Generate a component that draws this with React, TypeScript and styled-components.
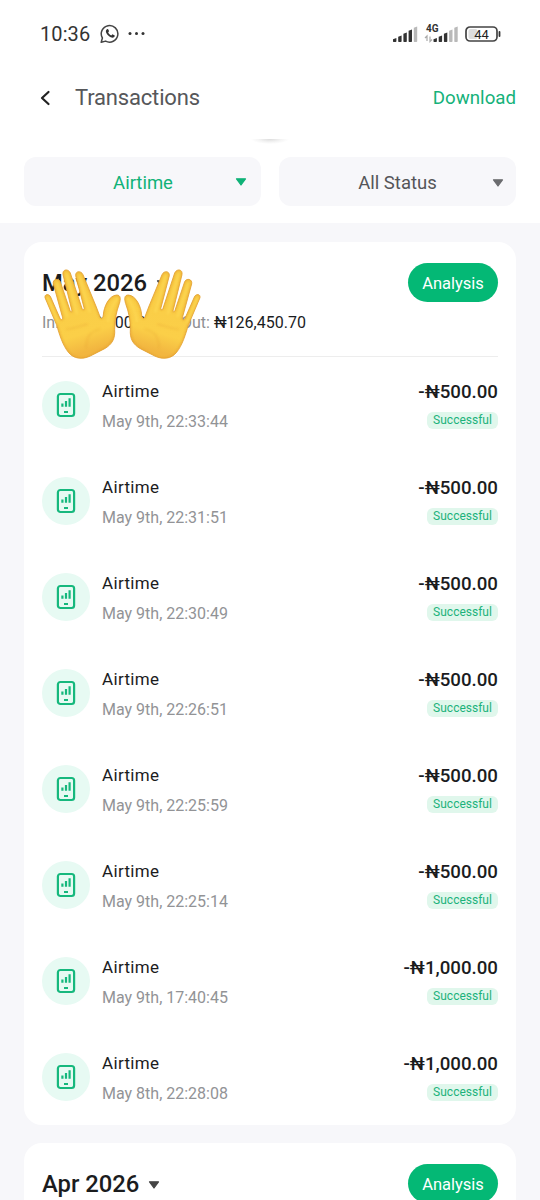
import React from "react";
import styled, { createGlobalStyle } from "styled-components";

const GlobalStyle = createGlobalStyle`
  * { box-sizing: border-box; }
  html, body { margin: 0; background: #f7f7fa; }
  body { font-family: Roboto, "Liberation Sans", sans-serif; color: #1b1c1e; }
`;

const Screen = styled.div`
  width: 540px;
  height: 1200px;
  overflow: hidden;
  background: #f7f7fa;
`;

const Top = styled.header`
  height: 223px;
  background: #fff;
`;

const StatusBar = styled.div`
  display: flex;
  align-items: center;
  height: 68px;
  padding: 0 39px 0 40px;
  color: #333;
`;

const Clock = styled.span`
  width: 50px;
  font-size: 20px;
  line-height: 24px;
  letter-spacing: 0.1px;
  white-space: nowrap;
`;

const StatusIcons = styled.div`
  display: flex;
  align-items: center;
  margin-left: auto;
`;

const CallIcon = styled.svg`
  display: block;
  margin-left: 10px;
`;

const NavBar = styled.nav`
  display: flex;
  align-items: center;
  height: 59px;
  padding: 0 24px 0 39px;
`;

const Title = styled.h1`
  margin: 0 0 0 24px;
  font-size: 22px;
  font-weight: 400;
  line-height: 28px;
  letter-spacing: -0.17px;
  color: #56575a;
`;

const Download = styled.span`
  margin-left: auto;
  font-size: 18.7px;
  line-height: 24px;
  color: #15b27a;
`;

const PullShadow = styled.div`
  width: 38px;
  height: 5px;
  margin: 12px auto 0;
  background: radial-gradient(ellipse 50% 100% at 50% 0, #dcdcdc, #f4f4f4 60%, #fff 100%);
`;

const Filters = styled.div`
  display: grid;
  grid-template-columns: 1fr 1fr;
  gap: 18px;
  padding: 13px 24px 0;
`;

const Filter = styled.div<{ $active?: boolean }>`
  display: flex;
  align-items: center;
  height: 49px;
  padding: 0 ${(p) => (p.$active ? 14 : 12)}px 0 ${(p) => (p.$active ? 27 : 24)}px;
  border-radius: 12px;
  background: #f7f7fa;
  color: ${(p) => (p.$active ? "#0fb277" : "#545558")};
  font-size: 18.5px;
  line-height: 24px;
`;

const FilterLabel = styled.span`
  flex: 1;
  padding-top: 2px;
  text-align: center;
`;

const Caret = styled.svg<{ $gap?: number; $drop?: number }>`
  display: block;
  flex: none;
  margin-left: ${(p) => p.$gap ?? 0}px;
  margin-top: ${(p) => p.$drop ?? 0}px;
`;

const List = styled.main`
  display: flex;
  flex-direction: column;
  gap: 18px;
  padding: 19px 24px 0;
`;

const Card = styled.section`
  padding: 21px 18px 0;
  border-radius: 18px;
  background: #fff;
`;

const MonthHead = styled.div`
  position: relative;
  height: 94px;
  border-bottom: 1px solid #ededed;
`;

const MonthRow = styled.div`
  display: flex;
  align-items: center;
  justify-content: space-between;
  height: 39px;
`;

const Month = styled.h2`
  display: flex;
  align-items: center;
  margin: 1px 0 0;
  font-size: 23.8px;
  font-weight: 500;
  line-height: 28px;
`;

const Analysis = styled.button`
  width: 90px;
  height: 39px;
  padding: 2px 0 0;
  border: 0;
  border-radius: 20px;
  background: #04b875;
  color: #fff;
  font-family: inherit;
  font-size: 16.5px;
`;

const Totals = styled.div`
  display: flex;
  margin-top: 10px;
  font-size: 16px;
  line-height: 22px;
  color: #8e8f92;
  white-space: pre;
`;

const TotalPart = styled.span<{ $width?: number }>`
  width: ${(p) => (p.$width ? `${p.$width}px` : "auto")};
`;

const Value = styled.b`
  font-weight: 400;
  color: #1b1c1e;
`;

const HandsArt = styled.svg`
  position: absolute;
  left: 0;
  top: 5px;
`;

const Rows = styled.ul`
  margin: 0;
  padding: 0;
  list-style: none;
`;

const Row = styled.li`
  display: flex;
  align-items: flex-start;
  height: 96px;
  padding-top: 24px;
`;

const Badge = styled.div`
  display: grid;
  place-items: center;
  width: 48px;
  height: 48px;
  margin-right: 12px;
  border-radius: 50%;
  background: #e7faf3;
`;

const Details = styled.div`
  flex: 1;
`;

const Name = styled.div`
  font-size: 17px;
  line-height: 21px;
  letter-spacing: 0.35px;
`;

const When = styled.div`
  margin-top: 9px;
  font-size: 16px;
  line-height: 22px;
  color: #929396;
`;

const Result = styled.div`
  display: flex;
  flex-direction: column;
  align-items: flex-end;
`;

const Amount = styled.div`
  font-size: 18.7px;
  font-weight: 500;
  line-height: 22px;
`;

const Status = styled.div`
  width: 71px;
  height: 17px;
  margin-top: 9px;
  border-radius: 6px;
  background: #e0f7ec;
  color: #1cb27b;
  font-size: 12px;
  line-height: 17px;
  text-align: center;
`;

function CaretDown({ color, gap, drop }: { color: string; gap?: number; drop?: number }) {
  return (
    <Caret $gap={gap} $drop={drop} width="12" height="8" viewBox="0 0 12 8">
      <path d="M1.5 .8h9L6 7Z" fill={color} stroke={color} strokeWidth="1.2" strokeLinejoin="round" />
    </Caret>
  );
}

function WhatsApp() {
  return (
    <CallIcon width="48" height="20" viewBox="0 0 48 20" fill="none">
      <path d="M1.2 18.3 2.4 14a8.3 8.3 0 1 1 3.2 3.1Z" stroke="#444" strokeWidth="1.5" strokeLinejoin="round" />
      <path d="M6.9 5.3c.5-.5 1.1-.4 1.4.2l.7 1.6c.1.4-.6 1-.8 1.4.7 1.4 1.7 2.3 3.2 2.9.5-.3.9-1.2 1.4-1l1.6.8c.6.3.3 1.4-.3 1.9-1.2 1.1-3.3.5-5.3-1.1-2-1.7-3.2-3.7-2.9-5.2.1-.6.5-1.1 1-1.5Z" fill="#333" />
      <circle cx="30" cy="9.5" r="1.5" fill="#333" />
      <circle cx="36.5" cy="9.5" r="1.5" fill="#333" />
      <circle cx="43" cy="9.5" r="1.5" fill="#333" />
    </CallIcon>
  );
}

const BARS = [
  [0, 4],
  [5.2, 6.5],
  [10.4, 9.5],
  [15.6, 12.5],
  [20.8, 15.5],
];

function Bars({ x, y, active }: { x: number; y: number; active: number }) {
  return (
    <g transform={`translate(${x} ${y})`}>
      {BARS.map(([bx, h], i) => (
        <path
          key={bx}
          d={`M${bx} ${-h + 1.2}L${bx + 3.4} ${-h}V-.8q0 .8-.8 .8H${bx + 0.6}q-.6 0-.6-.8Z`}
          fill={i < active ? "#333" : "#b9b9b9"}
        />
      ))}
    </g>
  );
}

function Signals() {
  return (
    <svg width="108" height="24" viewBox="0 0 108 24" fontFamily="Roboto, sans-serif">
      <Bars x={0} y={20} active={4} />
      <text x="33" y="9.9" fontSize="10" fontWeight="700" fill="#333">4G</text>
      <path d="M34 19v-5l-2 2M37 14.5v5l2-2" fill="none" stroke="#aaa" strokeWidth="1.2" />
      <Bars x={40.5} y={20} active={3} />
      <rect x="73" y="5" width="31" height="14" rx="4" fill="none" stroke="#444" strokeWidth="1.7" />
      <rect x="75.5" y="7" width="9" height="10" rx="2" fill="#ddd" />
      <path d="M106.5 10v4" stroke="#333" strokeWidth="1.8" strokeLinecap="round" />
      <text x="88.5" y="16.6" fontSize="13" fontWeight="400" textAnchor="middle" fill="#222">44</text>
    </svg>
  );
}

function PhoneBars() {
  return (
    <svg width="20" height="26" viewBox="0 0 20 26" fill="none" stroke="#16b87d">
      <rect x="1.9" y="2" width="16.2" height="22" rx="2.5" strokeWidth="2.2" />
      <path d="M6.4 14.8v-3.3M10 14.8V9M13.6 14.8V6.3" strokeWidth="2.2" />
      <path d="M8 20h4" strokeWidth="2" />
    </svg>
  );
}

const HAND =
  "M15 101C13 90 27 88 32 99L60 163C64 170 70 167 67 158L40 60C37 45 55 41 61 53L90 139C93 146 97 144 95 137L69 32C66 15 85 13 91 27L126 133C128 139 134 138 132 131L107 35C106 20 123 19 129 32L169 129L180 158C183 166 189 163 190 153C191 129 207 94 230 93C242 93 243 104 238 119C229 144 224 167 224 196C226 225 216 241 194 254L151 276C126 288 101 284 86 266C67 243 59 212 49 181Z";

function Palm() {
  return (
    <g>
      <path d={HAND} fill="url(#skin)" stroke="#e3a234" strokeWidth="2.5" strokeLinejoin="round" />
      <g clipPath="url(#hand)">
        <path d={HAND} fill="none" stroke="#e39d2f" strokeWidth="4" filter="url(#soft)" opacity=".8" />
        <path d="M23 103 53 173M51 60 82 157M80 32 111 148M118 38 149 143M231 105Q212 125 204 171" fill="none" stroke="#ffdc58" strokeWidth="7" strokeLinecap="round" filter="url(#soft)" opacity=".6" />
        <path d="M80 195C103 197 122 183 142 181M146 214C157 203 168 198 180 195M147 215Q137 233 139 251" fill="none" stroke="#e6a033" strokeWidth="3.5" strokeLinecap="round" filter="url(#soft)" opacity=".4" />
      </g>
    </g>
  );
}

function Hands() {
  return (
    <HandsArt width="160" height="92" viewBox="6 12 480 276">
      <defs>
        <linearGradient id="skin" x1="0" y1="0" x2=".25" y2="1">
          <stop offset="0" stopColor="#f8cb45" />
          <stop offset=".8" stopColor="#fbcf48" />
          <stop offset="1" stopColor="#f2b640" />
        </linearGradient>
        <clipPath id="hand"><path d={HAND} /></clipPath>
        <filter id="soft" x="-10%" y="-10%" width="120%" height="120%">
          <feGaussianBlur stdDeviation="2.5" />
        </filter>
      </defs>
      <Palm />
      <g transform="translate(495 0) scale(-1 1)">
        <Palm />
      </g>
    </HandsArt>
  );
}

const transactions = [
  ["May 9th, 22:33:44", "500.00"],
  ["May 9th, 22:31:51", "500.00"],
  ["May 9th, 22:30:49", "500.00"],
  ["May 9th, 22:26:51", "500.00"],
  ["May 9th, 22:25:59", "500.00"],
  ["May 9th, 22:25:14", "500.00"],
  ["May 9th, 17:40:45", "1,000.00"],
  ["May 8th, 22:28:08", "1,000.00"],
];

export default function App() {
  return (
    <Screen>
      <GlobalStyle />
      <Top>
        <StatusBar>
          <Clock>10:36</Clock>
          <WhatsApp />
          <StatusIcons><Signals /></StatusIcons>
        </StatusBar>
        <NavBar>
          <svg width="12" height="16" viewBox="0 0 12 16" fill="none">
            <path d="M9.5 2 3 8l6.5 6" stroke="#222" strokeWidth="2.2" strokeLinecap="round" strokeLinejoin="round" />
          </svg>
          <Title>Transactions</Title>
          <Download>Download</Download>
        </NavBar>
        <PullShadow />
        <Filters>
          <Filter $active>
            <FilterLabel>Airtime</FilterLabel>
            <CaretDown color="#0fb277" />
          </Filter>
          <Filter>
            <FilterLabel>All Status</FilterLabel>
            <CaretDown color="#6b6c6f" drop={2} />
          </Filter>
        </Filters>
      </Top>
      <List>
        <Card>
          <MonthHead>
            <MonthRow>
              <Month>May 2026<CaretDown color="#444" gap={9} drop={2} /></Month>
              <Analysis>Analysis</Analysis>
            </MonthRow>
            <Totals>
              <TotalPart $width={139}>In: <Value>₦100,000.00</Value></TotalPart>
              <TotalPart>Out: <Value>₦126,450.70</Value></TotalPart>
            </Totals>
            <Hands />
          </MonthHead>
          <Rows>
            {transactions.map(([when, amount]) => (
              <Row key={when}>
                <Badge><PhoneBars /></Badge>
                <Details>
                  <Name>Airtime</Name>
                  <When>{when}</When>
                </Details>
                <Result>
                  <Amount>-₦{amount}</Amount>
                  <Status>Successful</Status>
                </Result>
              </Row>
            ))}
          </Rows>
        </Card>
        <Card>
          <MonthHead>
            <MonthRow>
              <Month>Apr 2026<CaretDown color="#444" gap={9} drop={2} /></Month>
              <Analysis>Analysis</Analysis>
            </MonthRow>
          </MonthHead>
        </Card>
      </List>
    </Screen>
  );
}
